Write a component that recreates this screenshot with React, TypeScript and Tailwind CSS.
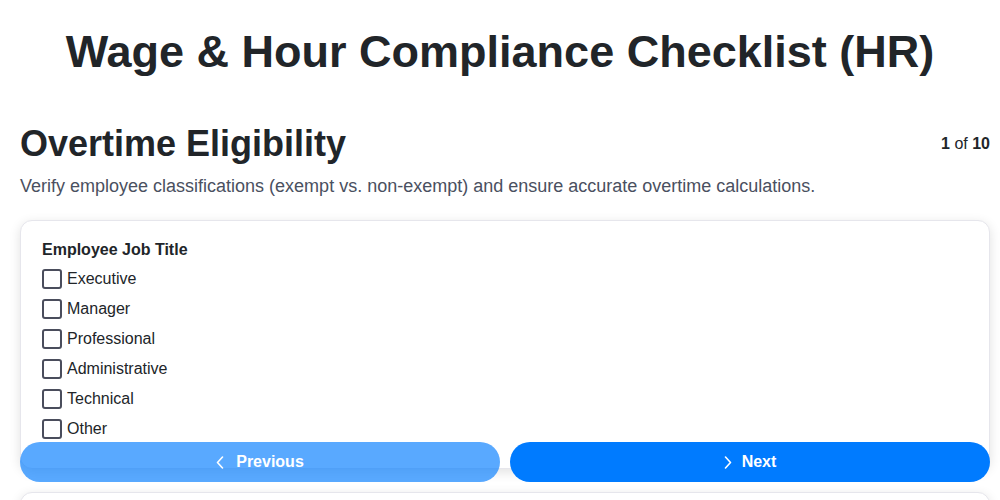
const options = ["Executive", "Manager", "Professional", "Administrative", "Technical", "Other"];

function Chevron({ dir }: { dir: "left" | "right" }) {
  return (
    <svg width="8" height="13" viewBox="0 0 8 13" fill="none" stroke="currentColor" strokeWidth="1.6" strokeLinecap="round" strokeLinejoin="round">
      {dir === "left" ? <path d="M6.5 1 1.5 6.5l5 5.5" /> : <path d="M1.5 1l5 5.5-5 5.5" />}
    </svg>
  );
}

function Checkbox({ label }: { label: string }) {
  return (
    <label className="flex items-center gap-[5px] h-[30px] cursor-pointer">
      <span className="w-5 h-5 rounded-[3px] border-2 border-[#4a4d5c] bg-white" />
      <span className="text-base text-[#212529]">{label}</span>
    </label>
  );
}

export default function App() {
  return (
    <div className="min-h-screen bg-white font-['Liberation_Sans',Arial,sans-serif] text-[#212529]">
      <h1 className="pt-[28px] text-center text-[45px] leading-[48px] font-bold">
        Wage &amp; Hour Compliance Checklist (HR)
      </h1>

      <div className="pl-5 pr-[10px]">
        <div className="mt-[46px] flex items-center justify-between">
          <h2 className="text-[36px] leading-[43px] font-bold">Overtime Eligibility</h2>
          <div className="text-base">
            <span className="font-bold">1</span> of <span className="font-bold">10</span>
          </div>
        </div>
        <p className="mt-[8px] text-lg leading-[27px] text-[#4a5060]">
          Verify employee classifications (exempt vs. non-exempt) and ensure accurate overtime calculations.
        </p>

        <div className="mt-[20px] rounded-xl border border-[#e6e6ec] bg-white shadow-[0_3px_12px_rgba(0,0,0,0.12)] pl-[21px] pr-5 pt-[19px] pb-[24px]">
          <div className="text-base font-bold leading-[20px] mb-[4px]">Employee Job Title</div>
          {options.map((o) => (
            <Checkbox key={o} label={o} />
          ))}
        </div>

        <div className="mt-[23px] h-[200px] rounded-xl border border-[#e6e6ec] bg-white shadow-[0_3px_12px_rgba(0,0,0,0.12)]" />
      </div>

      <div className="fixed left-5 right-[10px] bottom-[18px] flex gap-[10px]">
        <button
          disabled
          className="flex-1 h-10 rounded-full bg-[#007bff] opacity-65 text-white font-bold text-base flex items-center justify-center gap-3"
        >
          <Chevron dir="left" />
          Previous
        </button>
        <button className="flex-1 h-10 rounded-full bg-[#007bff] text-white font-bold text-base flex items-center justify-center gap-[10px] cursor-pointer">
          <Chevron dir="right" />
          Next
        </button>
      </div>
    </div>
  );
}
